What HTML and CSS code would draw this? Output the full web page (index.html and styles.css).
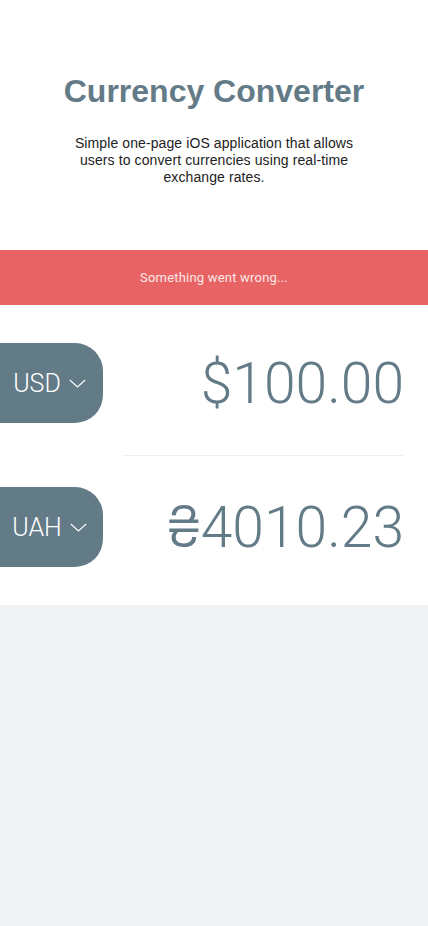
FILE: index.html
```html
<!DOCTYPE html>
<html lang="en">
<head>
<meta charset="utf-8">
<title>Currency Converter</title>
<link rel="stylesheet" href="styles.css">
</head>
<body>
<header class="header">
  <h1 class="title">Currency Converter</h1>
  <p class="subtitle">Simple one-page iOS application that allows<br>users to convert currencies using real-time<br>exchange rates.</p>
</header>
<div class="error">Something went wrong...</div>
<main class="converter">
  <div class="row">
    <button class="pill"><span>USD</span><svg class="chev" width="17" height="9" viewBox="0 0 17 9"><path d="M0.8 1 L8.5 8 L16.2 1" fill="none" stroke="#fff" stroke-width="1.1"/></svg></button>
    <div class="amount">$100.00</div>
  </div>
  <div class="divider"></div>
  <div class="row">
    <button class="pill"><span>UAH</span><svg class="chev" width="17" height="9" viewBox="0 0 17 9"><path d="M0.8 1 L8.5 8 L16.2 1" fill="none" stroke="#fff" stroke-width="1.1"/></svg></button>
    <div class="amount"><span class="sign">₴</span>4010.23</div>
  </div>
</main>
<div class="footer-space"></div>
</body>
</html>
```
FILE: styles.css
```css
html, body {
  margin: 0;
  padding: 0;
  background: #f2f3f7;
}
body {
  width: 428px;
  min-height: 926px;
  font-family: "Liberation Sans", Arial, sans-serif;
}
.header {
  background: #fff;
  padding: 71px 0 0;
  height: 250px;
  box-sizing: border-box;
  text-align: center;
}
.title {
  margin: 0;
  font-size: 32px;
  line-height: 40px;
  font-weight: 700;
  color: #637b87;
}
.subtitle {
  margin: 24px 0 0;
  font-size: 14px;
  line-height: 17px;
  color: #222;
  letter-spacing: 0.1px;
}
.error {
  height: 55px;
  background: #e86464;
  color: #fde8e8;
  font-family: Roboto, "Liberation Sans", sans-serif;
  font-size: 13px;
  display: flex;
  align-items: center;
  justify-content: center;
  letter-spacing: 0.2px;
}
.converter {
  background: #fff;
  padding: 38px 0;
  display: flex;
  flex-direction: column;
  gap: 32px;
}
.row {
  display: flex;
  align-items: center;
  justify-content: space-between;
  height: 80px;
}
.pill {
  width: 103px;
  height: 80px;
  border: 0;
  border-radius: 0 28px 28px 0;
  background: #637b87;
  color: #fff;
  display: flex;
  align-items: center;
  justify-content: center;
  gap: 8px;
  padding: 0 4px 0 0;
  font-family: Roboto, "Liberation Sans", sans-serif;
  font-weight: 300;
  font-size: 25px;
}
.chev {
  display: block;
  margin-top: 1px;
}
.amount {
  padding-right: 24px;
  font-family: Roboto, "Liberation Sans", sans-serif;
  font-weight: 300;
  font-size: 57px;
  color: #637b87;
  line-height: 1;
}
.sign {
  font-family: Inter, "Open Sans", "DejaVu Sans", sans-serif;
  font-weight: 300;
}
.divider {
  height: 1px;
  background: #f0f0f2;
  margin: 0 24px 0 123px;
  margin-bottom: -1px;
}
```
